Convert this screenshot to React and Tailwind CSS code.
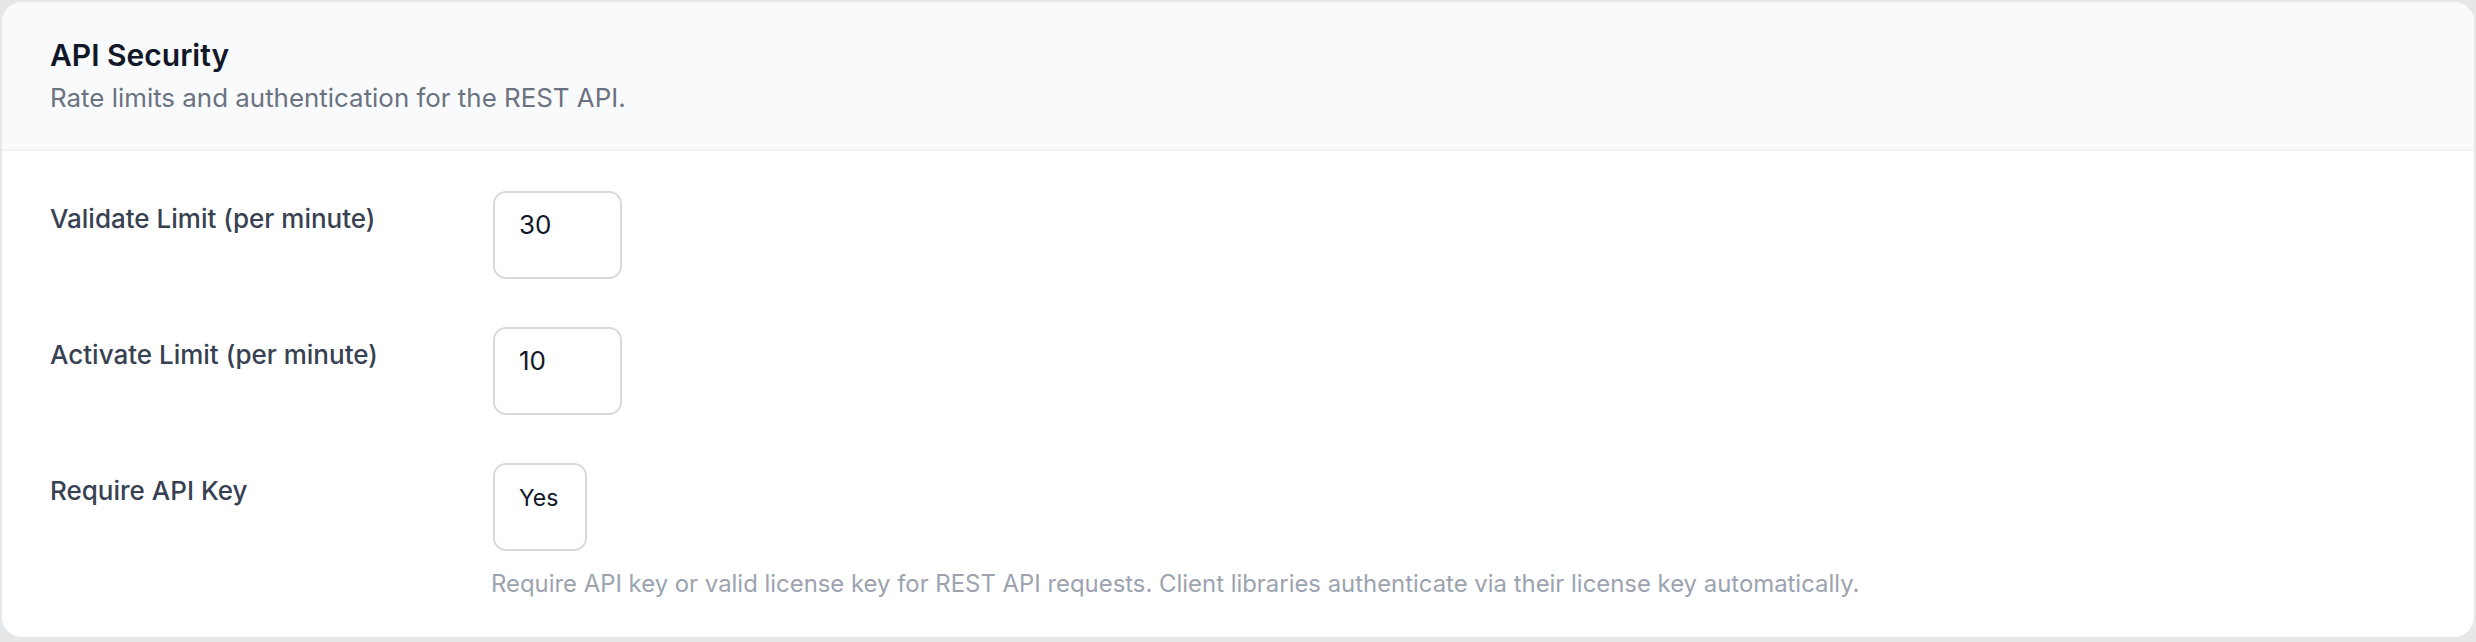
const fields = [
  { label: 'Validate Limit (per minute)', value: '30' },
  { label: 'Activate Limit (per minute)', value: '10' },
]

const FieldRow = ({ label, children }) => (
  <div className="grid grid-cols-[443px_1fr]">
    <div className="pt-[8px] text-[26px] leading-[1.5] font-medium text-[#374151]">{label}</div>
    <div>{children}</div>
  </div>
)

export default function App() {
  return (
    <div
      className="min-h-[642px] bg-[#e6e7e9] pt-[2px] px-[2px] pb-[3px]"
      style={{ fontFamily: 'Inter, "Noto Sans", sans-serif' }}
    >
      <div className="rounded-[20px] bg-white overflow-hidden">
        {/* Header */}
        <div className="bg-[#f9fafb] border-b-2 border-[#f1f2f4] pl-[48px] pr-[48px] pt-[31px] pb-[31px]">
          <h2 className="text-[30px] leading-[1.5] font-semibold text-[#111827]">API Security</h2>
          <p className="mt-[1px] text-[25.9px] leading-[1.5] text-[#6b7280]">
            Rate limits and authentication for the REST API.
          </p>
        </div>

        {/* Body */}
        <div className="pl-[48px] pr-[48px] pt-[40px] pb-[35px] flex flex-col gap-[48px]">
          {fields.map((f) => (
            <FieldRow key={f.label} label={f.label}>
              <div className="w-[129px] h-[88px] rounded-[13px] border-2 border-[#d9dadd] pl-[24px] pt-[12px] text-[26px] leading-[1.5] text-[#111827]">
                {f.value}
              </div>
            </FieldRow>
          ))}
          <FieldRow label="Require API Key">
            <div className="w-[94px] h-[88px] rounded-[13px] border-2 border-[#d9dadd] pl-[24px] pt-[16px] text-[23px] leading-[1.5] text-[#111827]">
              Yes
            </div>
            <p className="mt-[15px] -ml-[2px] text-[23.9px] leading-[1.5] text-[#9ca3af]">
              Require API key or valid license key for REST API requests. Client libraries authenticate via their license key automatically.
            </p>
          </FieldRow>
        </div>
      </div>
    </div>
  )
}
